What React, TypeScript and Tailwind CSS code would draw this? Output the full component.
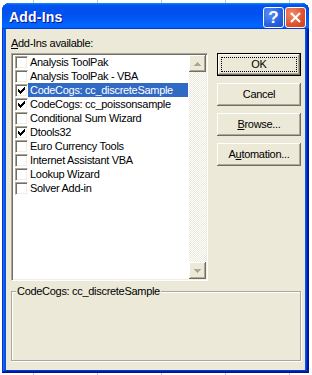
import clsx from "clsx";

const items = [
  { name: "Analysis ToolPak", on: false },
  { name: "Analysis ToolPak - VBA", on: false },
  { name: "CodeCogs: cc_discreteSample", on: true, sel: true },
  { name: "CodeCogs: cc_poissonsample", on: true },
  { name: "Conditional Sum Wizard", on: false },
  { name: "Dtools32", on: true },
  { name: "Euro Currency Tools", on: false },
  { name: "Internet Assistant VBA", on: false },
  { name: "Lookup Wizard", on: false },
  { name: "Solver Add-in", on: false },
];

const raised =
  "shadow-[inset_-1px_-1px_0_#716f64,inset_1px_1px_0_#fff,inset_-2px_-2px_0_#aca899]";

const Check = ({ on }: { on: boolean }) => (
  <span className="w-[13px] h-[13px] shrink-0 bg-white border border-t-[#aca899] border-l-[#aca899] border-r-white border-b-white shadow-[inset_1px_1px_0_#716f64,inset_-1px_-1px_0_#f1efe2] flex items-center justify-center">
    {on && (
      <svg width="7" height="7" viewBox="0 0 7 7" shapeRendering="crispEdges">
        <path
          d="M0 2h1v3H0z M1 3h1v3H1z M2 4h1v3H2z M3 3h1v3H3z M4 2h1v3H4z M5 1h1v3H5z M6 0h1v3H6z"
          fill="#000"
        />
      </svg>
    )}
  </span>
);

const Arrow = ({ up }: { up?: boolean }) => (
  <div className={clsx("h-[17px] w-[17px] bg-[#ece9d8] flex items-center justify-center", raised)}>
    <svg width="7" height="4" viewBox="0 0 7 4" shapeRendering="crispEdges">
      <path
        d={up ? "M3 0h1v1H3z M2 1h3v1H2z M1 2h5v1H1z M0 3h7v1H0z" : "M0 0h7v1H0z M1 1h5v1H1z M2 2h3v1H2z M3 3h1v1H3z"}
        fill="#aca899"
      />
    </svg>
  </div>
);

const Btn = ({ children, def }: { children: React.ReactNode; def?: boolean }) => (
  <div
    className={clsx(
      "relative h-[23px] w-[84px] flex items-center justify-center bg-[#ece9d8]",
      raised,
      def && "border border-black"
    )}
  >
    {def && <span className="absolute inset-[3px] border border-dotted border-black" />}
    <span className="leading-[13px]">{children}</span>
  </div>
);

export default function App() {
  return (
    <div className="w-[312px] h-[375px] bg-white bg-[linear-gradient(90deg,#c6c6c6_1px,transparent_1px)] bg-[length:64px_100%] bg-[position:33px_0] pt-[3px] pl-[2px] font-['Liberation_Sans',Arial,sans-serif]">
      <div className="w-[307px] h-[370px] flex flex-col rounded-t-[8px] overflow-hidden bg-[#0855dd] shadow-[inset_-1px_-1px_#00138c,inset_1px_1px_#0831d9,inset_-2px_-2px_#001ea0,inset_2px_2px_#166aee,inset_-3px_-3px_#003bda,inset_3px_3px_#0855dd]">
        {/* title bar */}
        <div className="h-[26px] shrink-0 flex items-start pt-[4px] pl-[7px] pr-[3px] bg-[linear-gradient(180deg,#0997ff,#0053ee_8%,#0050ee_40%,#06f_88%,#06f_93%,#005bff_95%,#003dd7_96%,#003dd7)]">
          <span className="flex-1 h-[21px] leading-[21px] text-white font-bold text-[14px] tracking-[0.2px] [text-shadow:1px_1px_#0f1089]">
            Add-Ins
          </span>
          <div className="flex gap-[1px]">
            <div className="w-[21px] h-[21px] rounded-[3px] border border-white bg-[radial-gradient(circle_at_30%_30%,#5a8ff5,#2660e0_60%,#1a4fcf)] flex items-center justify-center text-white font-bold text-[17px] leading-none">
              ?
            </div>
            <div className="w-[21px] h-[21px] rounded-[3px] border border-white bg-[radial-gradient(circle_at_30%_30%,#f08a6a,#e0512c_60%,#c7401c)] flex items-center justify-center">
              <svg width="11" height="11" viewBox="0 0 11 11">
                <path d="M1 1L10 10M10 1L1 10" stroke="#fff" strokeWidth="2.2" />
              </svg>
            </div>
          </div>
        </div>

        {/* body */}
        <div className="flex-1 mx-[4px] mb-[3px] bg-[#ece9d8] pt-[8px] pl-[5px] pr-[4px] text-[11px] tracking-[-0.3px] text-black">
          <div className="h-[13px] leading-[13px] mb-[3px]">
            <u>A</u>dd-Ins available:
          </div>
          <div className="flex gap-[9px]">
            <div className="w-[197px] h-[228px] flex bg-white border border-t-[#aca899] border-l-[#aca899] border-r-white border-b-white shadow-[inset_1px_1px_0_#716f64,inset_-1px_-1px_0_#f1efe2] p-[1px]">
              <div className="flex-1 flex flex-col">
                {items.map((it) => (
                  <div key={it.name} className="h-[14px] flex items-center pl-[2px] pr-[1px]">
                    <Check on={it.on} />
                    <span
                      className={clsx(
                        "flex-1 h-[14px] leading-[14px] px-[2px] whitespace-nowrap",
                        it.sel && "bg-[#316ac5] text-white"
                      )}
                    >
                      {it.name}
                    </span>
                  </div>
                ))}
              </div>
              <div className="w-[17px] flex flex-col">
                <Arrow up />
                <div className="flex-1 bg-[repeating-conic-gradient(#fff_0_25%,#ece9d8_0_50%)] bg-[length:2px_2px]" />
                <Arrow />
              </div>
            </div>
            <div className="flex flex-col gap-[7px]">
              <Btn def>OK</Btn>
              <Btn>Cancel</Btn>
              <Btn>
                <u>B</u>rowse...
              </Btn>
              <Btn>
                A<u>u</u>tomation...
              </Btn>
            </div>
          </div>
          <div className="relative mt-[10px] h-[70px] border border-[#aca899] shadow-[1px_1px_0_#fff,inset_1px_1px_0_#fff]">
            <span className="absolute -top-[7px] left-[4px] bg-[#ece9d8] px-[1px] leading-[13px]">
              CodeCogs: cc_discreteSample
            </span>
          </div>
        </div>
      </div>
    </div>
  );
}
